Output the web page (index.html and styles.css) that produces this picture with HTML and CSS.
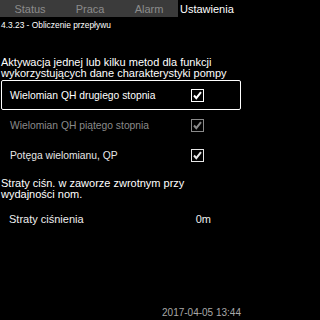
FILE: index.html
```html
<!DOCTYPE html>
<html lang="pl">
<head>
<meta charset="utf-8">
<link rel="stylesheet" href="styles.css">
</head>
<body>
<div class="screen">
  <nav class="tabs">
    <span class="tab">Status</span>
    <span class="tab">Praca</span>
    <span class="tab">Alarm</span>
    <span class="tab active">Ustawienia</span>
  </nav>
  <div class="title">4.3.23 - Obliczenie przepływu</div>
  <p class="desc first">Aktywacja jednej lub kilku metod dla funkcji<br>wykorzystujących dane charakterystyki pompy</p>
  <ul class="options">
    <li class="option selected">
      <span class="label">Wielomian QH drugiego stopnia</span>
      <svg class="check" viewBox="0 0 13 13" width="13" height="13"><rect x="0.5" y="0.5" width="12" height="12" fill="none" stroke="currentColor"/><path d="M3 6.5 L5.3 9.2 L10 3.2" fill="none" stroke="currentColor" stroke-width="2"/></svg>
    </li>
    <li class="option dim">
      <span class="label">Wielomian QH piątego stopnia</span>
      <svg class="check" viewBox="0 0 13 13" width="13" height="13"><rect x="0.5" y="0.5" width="12" height="12" fill="none" stroke="currentColor"/><path d="M3 6.5 L5.3 9.2 L10 3.2" fill="none" stroke="currentColor" stroke-width="2"/></svg>
    </li>
    <li class="option">
      <span class="label">Potęga wielomianu, QP</span>
      <svg class="check" viewBox="0 0 13 13" width="13" height="13"><rect x="0.5" y="0.5" width="12" height="12" fill="none" stroke="currentColor"/><path d="M3 6.5 L5.3 9.2 L10 3.2" fill="none" stroke="currentColor" stroke-width="2"/></svg>
    </li>
  </ul>
  <p class="desc second">Straty ciśn. w zaworze zwrotnym przy<br>wydajności nom.</p>
  <div class="value-row">
    <span class="label">Straty ciśnienia</span>
    <span class="value">0m</span>
  </div>
  <footer class="date">2017-04-05 13:44</footer>
</div>
</body>
</html>
```
FILE: styles.css
```css
html, body {
  margin: 0;
  padding: 0;
  background: #000;
}
.screen {
  width: 242px;
  height: 320px;
  background: #000;
  color: #fff;
  font-family: "Liberation Sans", Arial, sans-serif;
  display: flex;
  flex-direction: column;
  overflow: hidden;
}
.tabs {
  display: grid;
  grid-template-columns: 60px 60px 58px 1fr;
  height: 17px;
  background: #3b3b3b;
}
.tab {
  font-size: 11px;
  line-height: 19px;
  text-align: center;
  color: #8c8c8c;
}
.tab.active {
  background: #000;
  color: #fff;
  text-align: left;
  padding-left: 2px;
}
.title {
  margin-top: 2px;
  padding-left: 1px;
  font-size: 8.4px;
  line-height: 12px;
}
.desc {
  margin: 0;
  padding-left: 1px;
  font-size: 11px;
  line-height: 11px;
}
.desc.first {
  margin-top: 26px;
}
.options {
  list-style: none;
  margin: 1px 0 0 0;
  padding: 0;
}
.option {
  height: 30px;
  margin: 0 1px;
  box-sizing: border-box;
  border: 1px solid transparent;
  border-radius: 2px;
  display: flex;
  align-items: center;
  justify-content: space-between;
  padding: 0 36px 0 8px;
  font-size: 10.3px;
  color: #e6e6e6;
}
.option.selected {
  border-color: #fff;
  color: #fff;
}
.option.dim {
  color: #8a8a8a;
}
.check {
  display: block;
}
.desc.second {
  margin-top: 8px;
}
.value-row {
  height: 30px;
  margin-top: 4px;
  display: flex;
  align-items: center;
  justify-content: space-between;
  padding: 0 31px 0 9px;
  font-size: 11px;
  color: #eee;
}
.date {
  margin-top: auto;
  text-align: right;
  padding-right: 1px;
  font-size: 10px;
  line-height: 14px;
  color: #a8a8a8;
}
```
